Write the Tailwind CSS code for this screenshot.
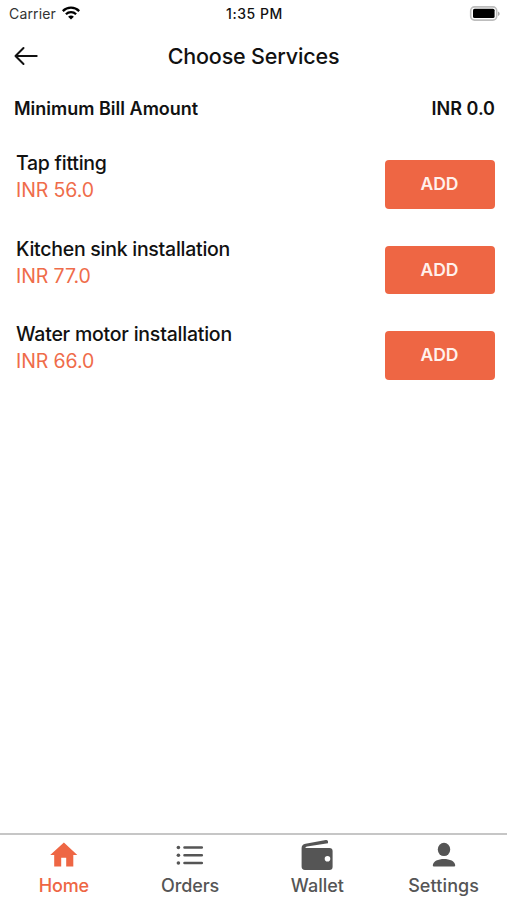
<!DOCTYPE html>
<html lang="en">
<head>
<meta charset="utf-8">
<meta name="viewport" content="width=device-width, initial-scale=1">
<title>Choose Services</title>
<script src="https://cdn.jsdelivr.net/npm/@tailwindcss/browser@4"></script>
</head>
<body class="bg-white">
<div class="flex h-[900px] w-[507px] flex-col overflow-hidden bg-white font-['Inter',sans-serif] text-[#111]">
  <div class="grid h-7 shrink-0 grid-cols-[1fr_auto_1fr] items-center pl-[9px] pr-[7px] text-[14px] leading-7">
    <div class="flex items-center gap-[6px]">
      <span class="tracking-[0.15px] text-[#333]">Carrier</span>
      <svg class="-mt-[3px] h-[14px] w-[18px]" viewBox="0 0 18 14" fill="none" stroke="#000" stroke-width="2.3"><path d="M.8 5.1C5.4.5 12.6.5 17.2 5.1M3.9 8.2c2.8-2.8 7.4-2.8 10.2 0"/><path d="M9 13.6 6.1 10.7c1.7-1.5 4.1-1.5 5.8 0z" fill="#000" stroke="none"/></svg>
    </div>
    <span class="text-center font-medium tracking-[0.55px]">1:35 PM</span>
    <svg class="-mt-[2px] h-[15px] w-[31px] justify-self-end" viewBox="0 0 31 15"><rect x="1.700" y=".9" width="26" height="13.200" rx="3.800" fill="#fff" stroke="#bdbdbd" stroke-width="1.600"/><rect x="4" y="2.700" width="21.600" height="9.400" rx="1.600" fill="#000"/><path d="M29 5.500c2.200.8 2.200 3.600 0 4.400z" fill="#aaa"/></svg>
  </div>
  <header class="grid h-14 shrink-0 grid-cols-[60px_1fr_60px] items-center">
    <svg class="ml-[14px] h-5 w-6" viewBox="0 0 24 20" fill="none" stroke="#111" stroke-width="2" stroke-linecap="round" stroke-linejoin="round"><path d="M9.500 2 1.500 10l8 8M1.500 10h21.200"/></svg>
    <h1 class="text-center text-[21.500px] font-medium tracking-[-0.170px]">Choose Services</h1>
  </header>
  <div class="flex h-12 shrink-0 items-center justify-between pl-[14px] pr-[12px] text-[18px] font-semibold">
    <span>Minimum Bill Amount</span><span>INR 0.0</span>
  </div>
  <main class="flex-1 pt-[9.5px]">
    <div class="flex h-[85.5px] items-center justify-between pl-4 pr-[12.5px]">
      <div class="mt-[-14px] text-[19.5px] leading-[27px]"><p class="font-medium tracking-[-0.26px]">Tap fitting</p><p class="tracking-[-0.1px] text-[#ef6c4a]">INR 56.0</p></div>
      <button class="h-[48.5px] w-[110px] rounded-[4px] bg-[#ee6644] text-[17.5px] font-semibold text-[#fff1ec]">ADD</button>
    </div>
    <div class="flex h-[85.5px] items-center justify-between pl-4 pr-[12.5px]">
      <div class="mt-[-13.5px] text-[19.5px] leading-[27px]"><p class="font-medium tracking-[-0.26px]">Kitchen sink installation</p><p class="tracking-[-0.1px] text-[#ef6c4a]">INR 77.0</p></div>
      <button class="h-[48.5px] w-[110px] rounded-[4px] bg-[#ee6644] text-[17.5px] font-semibold text-[#fff1ec]">ADD</button>
    </div>
    <div class="flex h-[85.5px] items-center justify-between pl-4 pr-[12.5px]">
      <div class="mt-[-14px] text-[19.5px] leading-[27px]"><p class="font-medium tracking-[-0.22px]">Water motor installation</p><p class="tracking-[-0.1px] text-[#ef6c4a]">INR 66.0</p></div>
      <button class="h-[48.5px] w-[110px] rounded-[4px] bg-[#ee6644] text-[17.5px] font-semibold text-[#fff1ec]">ADD</button>
    </div>
  </main>
  <nav class="grid h-[67px] shrink-0 grid-cols-4 border-t-2 border-[#c6c6c6] pt-[4px] text-[18px] font-medium text-[#555]">
    <a class="flex flex-col items-center text-[#ee6644]">
      <svg class="h-8 w-8" viewBox="0 0 32 32" fill="currentColor"><path d="M16.900 3.500 3.200 16h4v11.600h7v-8.800h5v8.800h7.100V16h4z"/></svg>
      <span class="pl-px leading-[30px] tracking-[-0.1px]">Home</span>
    </a>
    <a class="flex flex-col items-center">
      <svg class="h-8 w-8" viewBox="0 0 32 32" fill="currentColor"><circle cx="4.400" cy="8.500" r="1.800"/><circle cx="4.400" cy="16.200" r="1.800"/><circle cx="4.400" cy="24" r="1.800"/><path d="M10.600 7.200h17.100q1.400 0 1.400 1.300t-1.400 1.300H10.600q-1.400 0-1.400-1.300t1.400-1.300zM10.600 14.900h17.100q1.400 0 1.400 1.300t-1.400 1.300H10.600q-1.400 0-1.400-1.300t1.400-1.300zM10.600 22.700h17.100q1.400 0 1.400 1.300t-1.400 1.300H10.600q-1.400 0-1.400-1.300t1.400-1.300z"/></svg>
      <span class="leading-[30px] tracking-[-0.1px]">Orders</span>
    </a>
    <a class="flex flex-col items-center">
      <svg class="h-8 w-8" viewBox="0 0 32 32" fill="currentColor"><path fill-rule="evenodd" d="M4.500 4.700 24.800 1q2.200-.3 2.200 1.500v1.700L6 7.400q-1.600.4-1.600 1.500h24q3.200 0 3.200 3.200v15.600q0 3.300-3.200 3.300H4q-3.400 0-3.400-3.400V9Q.6 5.400 4.500 4.700zM26.500 16.900a2.800 2.800 0 1 0 0 5.600 2.800 2.800 0 0 0 0-5.600z"/></svg>
      <span class="pl-px leading-[30px]">Wallet</span>
    </a>
    <a class="flex flex-col items-center">
      <svg class="h-8 w-8" viewBox="0 0 32 32" fill="currentColor"><ellipse cx="16" cy="10.400" rx="6.200" ry="6.700"/><path d="M4.800 26.500C4.800 17.900 27.200 17.900 27.200 26.500q0 1-1 1H5.800q-1 0-1-1z"/></svg>
      <span class="leading-[30px] tracking-[0.1px]">Settings</span>
    </a>
  </nav>
</div>
</body>
</html>
